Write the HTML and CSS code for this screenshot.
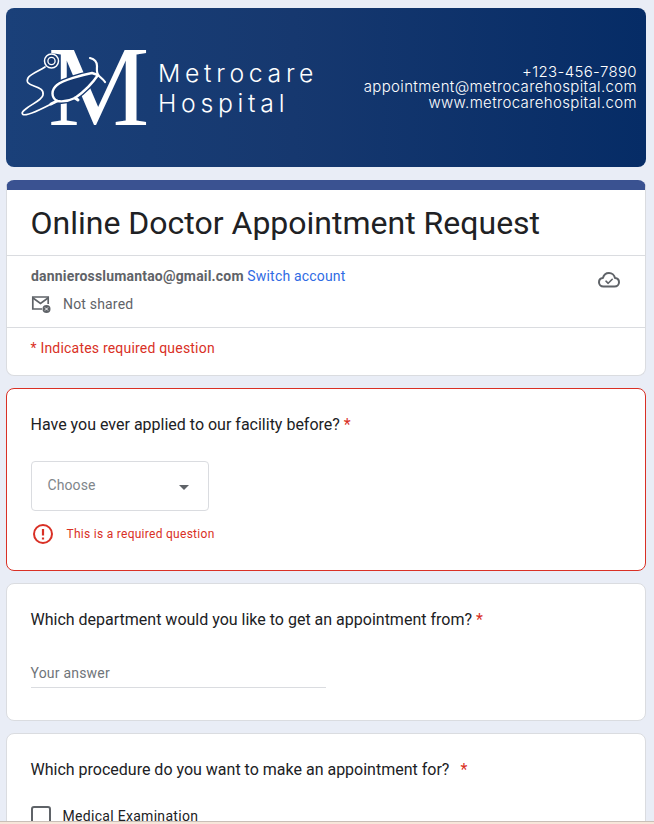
FILE: index.html
```html
<!DOCTYPE html>
<html lang="en">
<head>
  <meta charset="UTF-8">
  <title>Online Doctor Appointment Request</title>
  <meta name="viewport" content="width=device-width, initial-scale=1">
  <link rel="stylesheet" href="styles.css">
</head>
<body>

  <header class="banner">
    <div class="logo">
      <span class="logo-m">M</span>
      <svg class="logo-scope" width="100" height="80" viewBox="0 0 100 80" fill="none" stroke="#fff" stroke-linecap="round" stroke-linejoin="round">
        <circle cx="29.500" cy="14" r="7" stroke-width="1.500" fill="#16386f"/>
        <circle cx="29.500" cy="14" r="3.600" stroke-width="1.300"/>
        <path d="M23 20C17 24 8 27 6 31C4 35 6 37 12 39C18 41 22 43 21 48C20 53 10 57 5 61C1 64 -1 66 1 67.500C4 69 18 63 33 55" stroke-width="1.700"/>
        <path d="M35 54C29 50 29 43 35 38C41 33 60 28 70 26L76 28C72 34 63 44 53 51C47 54 41 55 35 54Z" stroke="#16386f" stroke-width="5" fill="#16386f"/>
        <path d="M35 54C29 50 29 43 35 38C41 33 60 28 70 26L76 28C72 34 63 44 53 51C47 54 41 55 35 54Z" stroke-width="2.400"/>
        <path d="M68 11C72 12 75 15 75 19C75 23 74 26 77 29C79 31 81 32 83 35" stroke-width="2.200"/>
        <path d="M35 54L29 57M53 51L56 53" stroke-width="3"/>
      </svg>
      <div class="logo-name">
        <div>Metrocare</div>
        <div>Hospital</div>
      </div>
    </div>
    <div class="contact">
      <div>+123-456-7890</div>
      <div>appointment@metrocarehospital.com</div>
      <div>www.metrocarehospital.com</div>
    </div>
  </header>

  <section class="card title-card">
    <h1>Online Doctor Appointment Request</h1>
    <div class="account">
      <div class="account-row">
        <div><b>dannierosslumantao@gmail.com</b> <a href="#">Switch account</a></div>
        <svg class="cloud-icon" width="24" height="24" viewBox="0 0 24 24" fill="none" stroke="#5f6368" stroke-width="2" stroke-linejoin="round" stroke-linecap="round">
          <path d="M6.500 19.500C3.800 19.500 2 17.600 2 15.300C2 13 3.700 11.300 5.900 11.100C6.700 8.100 9 6 12 6C15 6 17.500 8.200 18 11.100C20.300 11.300 22 13 22 15.300C22 17.600 20.200 19.500 17.500 19.500Z"/>
          <path d="M9 14.200L11.200 16.300L15.200 12.300" stroke-width="1.600"/>
        </svg>
      </div>
      <div class="shared-row">
        <svg width="20" height="20" viewBox="0 0 20 20" fill="none" stroke="#5f6368" stroke-width="1.700">
          <path d="M11 15H1.800V3H17.200V10"/>
          <path d="M2 4L9.500 9.500L17 4"/>
          <circle cx="15.500" cy="15" r="4" fill="#5f6368" stroke="none"/>
          <path d="M14 13.500L17 16.500M17 13.500L14 16.500" stroke="#fff" stroke-width="1"/>
        </svg>
        <span>Not shared</span>
      </div>
    </div>
    <div class="required-note">* Indicates required question</div>
  </section>

  <section class="card question error">
    <div class="question-text">Have you ever applied to our facility before? <span class="star">*</span></div>
    <div class="dropdown">
      <span>Choose</span>
      <i class="caret"></i>
    </div>
    <div class="error-row">
      <svg width="24" height="24" viewBox="0 0 24 24" fill="none">
        <circle cx="12" cy="12" r="9" stroke="#d93025" stroke-width="2"/>
        <path d="M12 7V13.500M12 15.500V17.500" stroke="#d93025" stroke-width="2.200"/>
      </svg>
      <span>This is a required question</span>
    </div>
  </section>

  <section class="card question dept">
    <div class="question-text">Which department would you like to get an appointment from? <span class="star">*</span></div>
    <div class="answer">Your answer</div>
  </section>

  <section class="card question procedure">
    <div class="question-text">Which procedure do you want to make an appointment for? <span class="star star-wide">*</span></div>
    <label class="check-row"><i class="checkbox"></i>Medical Examination</label>
  </section>

  <div class="window-edge"></div>

</body>
</html>
```

FILE: styles.css
```css
html, body {
  height: 824px;
  overflow: hidden;
}

body {
  font-family: Roboto, sans-serif;
  background: #e9edf6;
  margin: 0;
  padding: 8px 8px 0 6px;
  box-sizing: border-box;
  color: #202124;
}

.banner {
  height: 159px;
  border-radius: 8px;
  background: linear-gradient(90deg, #1a4079 0%, #16386f 45%, #062c66 100%);
  display: flex;
  justify-content: space-between;
  align-items: center;
  padding: 0 9px 0 16px;
  color: #fff;
  box-sizing: border-box;
}

.logo {
  position: relative;
  display: flex;
  align-items: center;
  height: 80px;
  margin-top: -1px;
}

.logo-m {
  font-family: "Liberation Serif", serif;
  font-size: 114px;
  line-height: 80px;
  width: 100px;
  margin-left: 26px;
  margin-right: 10px;
  letter-spacing: -2px;
}

.logo-scope {
  position: absolute;
  left: 0;
  top: 0;
  overflow: visible;
}

.logo-name {
  font-family: Inter, sans-serif;
  font-weight: 300;
  font-size: 24.800px;
  letter-spacing: 4.700px;
  margin-top: 2px;
}

.logo-name div {
  height: 30px;
  line-height: 30px;
}

.contact {
  font-family: Inter, sans-serif;
  font-weight: 300;
  font-size: 15px;
  letter-spacing: 0.360px;
  text-align: right;
  margin-top: -1px;
}

.contact div {
  height: 15.500px;
  line-height: 15.500px;
}

.card {
  background: #fff;
  border: 1px solid #dadce0;
  border-radius: 8px;
  margin-top: 12px;
  box-sizing: border-box;
}

.title-card {
  margin-top: 13px;
  height: 196px;
  border-top: 10px solid #3a5291;
}

h1 {
  margin: 0;
  font-size: 32px;
  font-weight: 400;
  line-height: 40px;
  height: 66px;
  padding: 13px 23.500px 0;
  box-sizing: border-box;
  color: #202124;
  border-bottom: 1px solid #dadce0;
}

.account {
  height: 72px;
  padding: 11px 24px 0;
  box-sizing: border-box;
  border-bottom: 1px solid #dadce0;
  font-size: 14px;
  letter-spacing: 0.180px;
  color: #5f6368;
}

.account-row {
  display: flex;
  justify-content: space-between;
  height: 18px;
  line-height: 18px;
}

.account-row b {
  font-weight: 700;
}

.account-row a {
  color: #2f6be4;
  text-decoration: none;
}

.cloud-icon {
  margin: 0;
}

.shared-row {
  display: flex;
  align-items: center;
  gap: 12px;
  margin-top: 9px;
  height: 20px;
}

.required-note {
  padding: 11px 23.500px 0;
  font-size: 14px;
  line-height: 18px;
  letter-spacing: 0.200px;
  color: #d93025;
}

.question {
  padding: 24px 23.500px 0;
}

.question-text {
  font-size: 16px;
  line-height: 24px;
  color: #202124;
}

.star {
  color: #d93025;
}

.star-wide {
  margin-left: 7px;
}

.error {
  height: 183px;
  border-color: #d93025;
}

.dropdown {
  margin-top: 24px;
  width: 178px;
  height: 50px;
  border: 1px solid #dadce0;
  border-radius: 4px;
  display: flex;
  align-items: center;
  justify-content: space-between;
  padding: 0 19px 2px 16px;
  box-sizing: border-box;
  font-size: 14px;
  letter-spacing: 0.100px;
  color: #80868b;
}

.caret {
  width: 0;
  height: 0;
  border-left: 5px solid transparent;
  border-right: 5px solid transparent;
  border-top: 5px solid #5f6368;
  margin-top: 4px;
}

.error-row {
  display: flex;
  align-items: center;
  gap: 12px;
  margin-top: 11px;
  font-size: 12px;
  letter-spacing: 0.280px;
  color: #d93025;
}

.dept {
  height: 138px;
}

.answer {
  margin-top: 30px;
  width: 295px;
  height: 26px;
  line-height: 22px;
  font-size: 14px;
  letter-spacing: 0.200px;
  color: #70757a;
  border-bottom: 1px solid #dadce0;
  box-sizing: border-box;
}

.procedure {
  height: 140px;
}

.check-row {
  display: flex;
  align-items: center;
  gap: 12px;
  margin-top: 24px;
  font-size: 14px;
  letter-spacing: 0.300px;
  color: #202124;
}

.checkbox {
  width: 20px;
  height: 20px;
  border: 2px solid #5f6368;
  border-radius: 3px;
  box-sizing: border-box;
}

.window-edge {
  position: fixed;
  left: 0;
  right: 0;
  bottom: 0;
  height: 3px;
  border-top: 1px solid #c9bfb8;
  background: #f7e6da;
  box-sizing: border-box;
}
```
